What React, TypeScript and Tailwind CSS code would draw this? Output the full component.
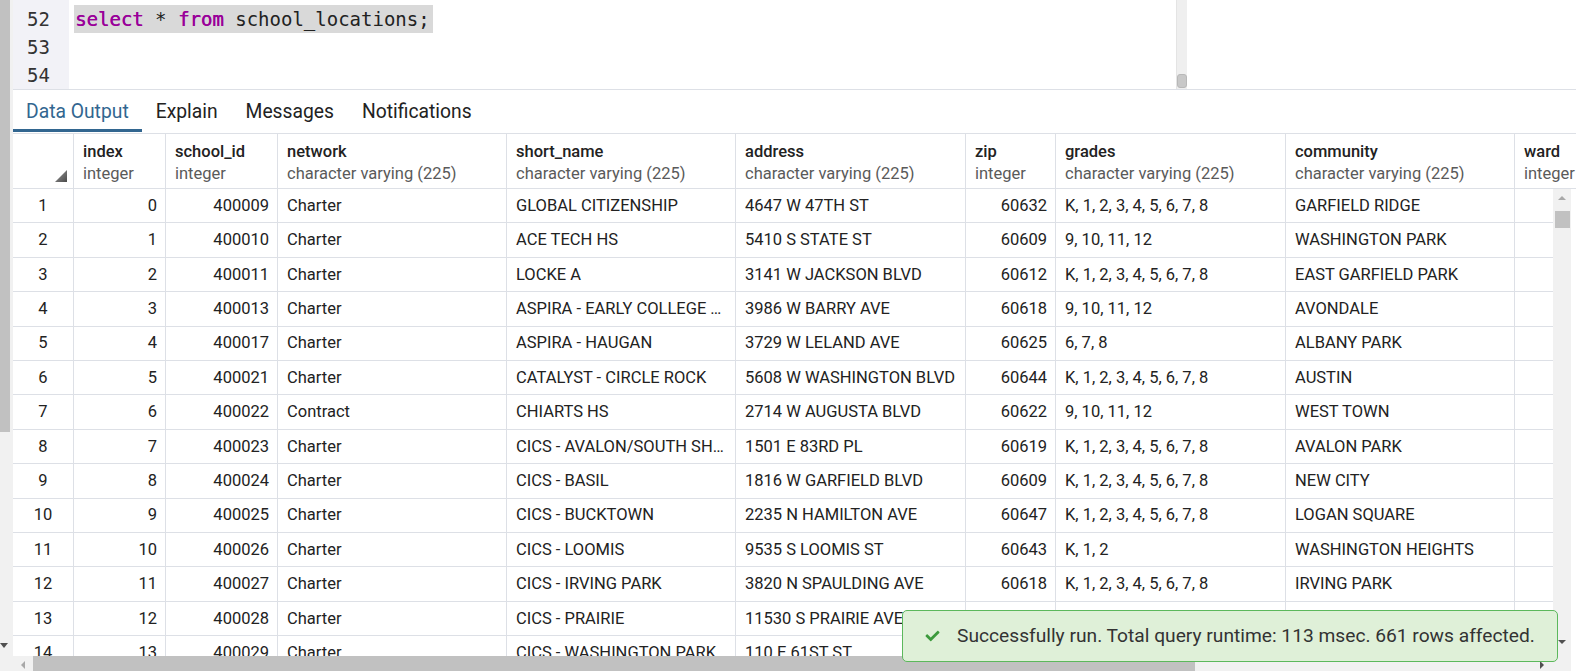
import React from 'react'

const K8 = 'K, 1, 2, 3, 4, 5, 6, 7, 8'
const HS = '9, 10, 11, 12'
const VC = 'character varying (225)'

const cols = [
  { name: 'index', type: 'integer', w: 'w-[92px]', num: true },
  { name: 'school_id', type: 'integer', w: 'w-[112px]', num: true },
  { name: 'network', type: VC, w: 'w-[229px]' },
  { name: 'short_name', type: VC, w: 'w-[229px]' },
  { name: 'address', type: VC, w: 'w-[230px]' },
  { name: 'zip', type: 'integer', w: 'w-[90px]', num: true },
  { name: 'grades', type: VC, w: 'w-[230px]' },
  { name: 'community', type: VC, w: 'w-[229px]' },
  { name: 'ward', type: 'integer', w: 'w-[80px]', num: true },
]

const rows = [
  ['0', '400009', 'Charter', 'GLOBAL CITIZENSHIP', '4647 W 47TH ST', '60632', K8, 'GARFIELD RIDGE', ''],
  ['1', '400010', 'Charter', 'ACE TECH HS', '5410 S STATE ST', '60609', HS, 'WASHINGTON PARK', ''],
  ['2', '400011', 'Charter', 'LOCKE A', '3141 W JACKSON BLVD', '60612', K8, 'EAST GARFIELD PARK', ''],
  ['3', '400013', 'Charter', 'ASPIRA - EARLY COLLEGE …', '3986 W BARRY AVE', '60618', HS, 'AVONDALE', ''],
  ['4', '400017', 'Charter', 'ASPIRA - HAUGAN', '3729 W LELAND AVE', '60625', '6, 7, 8', 'ALBANY PARK', ''],
  ['5', '400021', 'Charter', 'CATALYST - CIRCLE ROCK', '5608 W WASHINGTON BLVD', '60644', K8, 'AUSTIN', ''],
  ['6', '400022', 'Contract', 'CHIARTS HS', '2714 W AUGUSTA BLVD', '60622', HS, 'WEST TOWN', ''],
  ['7', '400023', 'Charter', 'CICS - AVALON/SOUTH SH…', '1501 E 83RD PL', '60619', K8, 'AVALON PARK', ''],
  ['8', '400024', 'Charter', 'CICS - BASIL', '1816 W GARFIELD BLVD', '60609', K8, 'NEW CITY', ''],
  ['9', '400025', 'Charter', 'CICS - BUCKTOWN', '2235 N HAMILTON AVE', '60647', K8, 'LOGAN SQUARE', ''],
  ['10', '400026', 'Charter', 'CICS - LOOMIS', '9535 S LOOMIS ST', '60643', 'K, 1, 2', 'WASHINGTON HEIGHTS', ''],
  ['11', '400027', 'Charter', 'CICS - IRVING PARK', '3820 N SPAULDING AVE', '60618', K8, 'IRVING PARK', ''],
  ['12', '400028', 'Charter', 'CICS - PRAIRIE', '11530 S PRAIRIE AVE', '60628', K8, 'WEST PULLMAN', ''],
  ['13', '400029', 'Charter', 'CICS - WASHINGTON PARK', '110 E 61ST ST', '60637', K8, 'WOODLAWN', ''],
]

function Tab({ label, active }: { label: string; active?: boolean }) {
  return (
    <div
      className={
        active
          ? 'flex items-center border-b-[3px] border-[#326690] px-[13px] pt-[5px] text-[#326690]'
          : 'flex items-center border-b-[3px] border-transparent px-[14px] pt-[5px] text-[#222]'
      }
    >
      {label}
    </div>
  )
}

export default function App() {
  return (
    <div className="relative flex h-[671px] w-[1576px] overflow-hidden bg-white font-['Roboto',sans-serif] text-[#222]">
      {/* outer scrollbar */}
      <div className="flex w-[13px] shrink-0 flex-col bg-[#f1f1f1]">
        <div className="h-[432px] w-[10px] bg-[#c1c1c1]" />
        <div className="flex-1" />
        <svg className="mb-[23px] h-[5px] w-[8px]" viewBox="0 0 8 5">
          <polygon points="0,0 8,0 4,5" fill="#505050" />
        </svg>
      </div>

      <div className="flex min-w-0 flex-1 flex-col">
        {/* query editor */}
        <div className="flex h-[89px] shrink-0">
          <div className="w-[56px] shrink-0 bg-[#f2f2f7] pr-[19px] pt-[5px] text-right font-['DejaVu_Sans_Mono',monospace] text-[19px] leading-[28px] text-[#333]">
            <div>52</div>
            <div>53</div>
            <div>54</div>
          </div>
          <div className="flex-1 pl-[5px] pt-[5px] font-['DejaVu_Sans_Mono',monospace] text-[19px] leading-[28px] text-[#222]">
            <span className="inline-block bg-[#d9d9d9] pl-[1px] pr-[3px]">
              <span className="text-[#990099] [text-shadow:0.4px_0_0_#990099]">select</span> *{' '}
              <span className="text-[#990099] [text-shadow:0.4px_0_0_#990099]">from</span> school_locations;
            </span>
          </div>
          <div className="flex w-[11px] shrink-0 flex-col justify-end border-l border-[#e4e4e4] bg-[#efefef] pb-px">
            <div className="h-[14px] rounded-[3px] border border-[#b8b8b8] bg-[#c8c8c8]" />
          </div>
          <div className="w-[389px] shrink-0" />
        </div>
        <div className="h-[1px] shrink-0 bg-[#dde0e6]" />

        {/* tabs */}
        <div className="flex h-[42px] shrink-0 text-[19.3px]">
          <Tab label="Data Output" active />
          <Tab label="Explain" />
          <Tab label="Messages" />
          <Tab label="Notifications" />
        </div>
        <div className="h-[1px] shrink-0" />

        {/* grid header */}
        <div className="flex h-[56px] shrink-0 overflow-hidden border-y border-[#dde0e6] text-[16.5px] leading-[22px]">
          <div className="flex w-[61px] shrink-0 items-end justify-end border-r border-[#dde0e6] pb-[6px] pr-[6px]">
            <svg className="h-[12px] w-[12px]" viewBox="0 0 12 12">
              <defs>
                <linearGradient id="tri" x1="0" y1="0" x2="1" y2="1">
                  <stop offset="0" stopColor="#9a9a9a" />
                  <stop offset="1" stopColor="#4a4a4a" />
                </linearGradient>
              </defs>
              <polygon points="12,0 12,12 0,12" fill="url(#tri)" />
            </svg>
          </div>
          {cols.map((c) => (
            <div key={c.name} className={`${c.w} shrink-0 whitespace-nowrap border-r border-[#dde0e6] px-[9px] pt-[7px]`}>
              <div className="font-medium text-[#222]">{c.name}</div>
              <div className="text-[#5a5a5a]">{c.type}</div>
            </div>
          ))}
        </div>

        {/* grid body */}
        <div className="flex h-[467px] shrink-0">
          <div className="min-w-0 flex-1 overflow-hidden text-[16.5px]">
            {rows.map((r, i) => (
              <div key={i} className="flex h-[34.4px] items-center border-b border-[#dde0e6]">
                <div className="flex h-full w-[61px] shrink-0 items-center justify-center border-r border-[#dde0e6] pt-px">{i + 1}</div>
                {cols.map((c, j) => (
                  <div
                    key={c.name}
                    className={
                      c.num
                        ? `${c.w} flex h-full shrink-0 items-center justify-end whitespace-nowrap border-r border-[#dde0e6] pr-[8px] pt-px`
                        : `${c.w} flex h-full shrink-0 items-center truncate whitespace-nowrap border-r border-[#dde0e6] pl-[9px] pt-px`
                    }
                  >
                    {r[j]}
                  </div>
                ))}
              </div>
            ))}
          </div>
          <div className="flex w-[18px] shrink-0 flex-col items-center bg-[#f1f1f1] pt-[7px]">
            <svg className="h-[4px] w-[8px]" viewBox="0 0 8 4">
              <polygon points="0,4 8,4 4,0" fill="#a8a8a8" />
            </svg>
            <div className="mt-[11px] h-[17px] w-[15px] bg-[#c1c1c1]" />
            <div className="flex-1" />
            <svg className="mb-[12px] h-[4px] w-[8px]" viewBox="0 0 8 4">
              <polygon points="0,0 8,0 4,4" fill="#505050" />
            </svg>
          </div>
          <div className="w-[5px] shrink-0" />
        </div>

        {/* horizontal scrollbar */}
        <div className="flex h-[15px] shrink-0">
          <div className="flex w-[20px] shrink-0 justify-center bg-[#f1f1f1] pt-[5px]">
            <svg className="h-[8px] w-[4px]" viewBox="0 0 4 8">
              <polygon points="4,0 4,8 0,4" fill="#a8a8a8" />
            </svg>
          </div>
          <div className="w-[1162px] shrink-0 bg-[#c1c1c1]" />
          <div className="flex flex-1 justify-end bg-[#f1f1f1] pr-[9px] pt-[5px]">
            <svg className="h-[8px] w-[4px]" viewBox="0 0 4 8">
              <polygon points="0,0 0,8 4,4" fill="#505050" />
            </svg>
          </div>
          <div className="w-[18px] shrink-0 bg-[#f1f1f1]" />
          <div className="w-[5px] shrink-0" />
        </div>
      </div>

      {/* toast */}
      <div className="absolute left-[902px] top-[610px] flex h-[52px] w-[656px] items-center rounded-[5px] border border-[#5cb85c] bg-[#dff0d8] pl-[22px] text-[19.2px] text-[#333]">
        <svg className="mr-[17px] h-[14px] w-[15px]" viewBox="0 0 512 512">
          <path
            fill="#3c9a3c"
            d="M173.898 439.404l-166.4-166.4c-9.997-9.997-9.997-26.206 0-36.204l36.203-36.204c9.997-9.998 26.207-9.998 36.204 0L192 312.69 432.095 72.596c9.997-9.997 26.207-9.997 36.204 0l36.203 36.204c9.997 9.997 9.997 26.206 0 36.204l-294.4 294.401c-9.998 9.997-26.207 9.997-36.204-.001z"
          />
        </svg>
        Successfully run. Total query runtime: 113 msec. 661 rows affected.
      </div>
    </div>
  )
}
